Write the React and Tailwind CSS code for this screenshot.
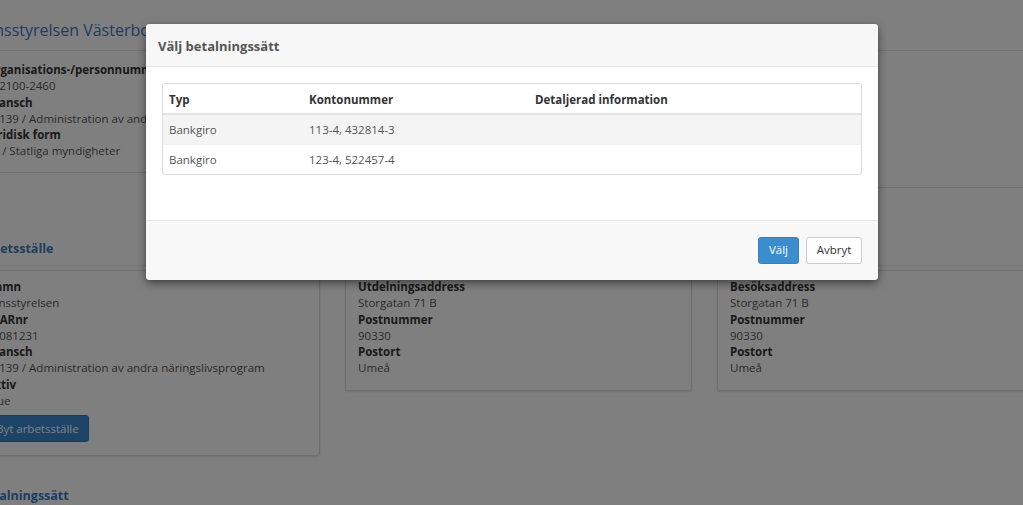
import React from "react";

function Field({ label, value }) {
  return (
    <>
      <div className="font-bold text-[#333]">{label}</div>
      <div className="text-[#555]">{value}</div>
    </>
  );
}

export default function App() {
  return (
    <div className="relative w-[1023px] h-[505px] overflow-hidden bg-white font-['Open_Sans',sans-serif] text-[11.5px] leading-[16.3px] text-[#555]">
      {/* underlying page */}
      <div className="-ml-[27px] w-[1120px] flex flex-col">
        <div className="pl-[4px] pt-[18px] pb-[8px] border-b border-[#e5e5e5] text-[16px] leading-[24px] text-[#3a7bbf]">
          Länsstyrelsen Västerbotten
        </div>
        <div className="flex gap-[20px] items-start">
          <div className="w-[520px] border-x border-b border-[#ddd] px-[12px] pt-[11px] pb-[12px]">
            <Field label="Organisations-/personnummer" value="202100-2460" />
            <Field label="Bransch" value="84139 / Administration av andra näringslivsprogram" />
            <Field label="Juridisk form" value="81 / Statliga myndigheter" />
          </div>
          <div className="flex-1 h-[137px] border-x border-b border-[#ddd]"></div>
        </div>

        <div className="mt-[51px] pl-[5px] pb-[6px] border-b border-[#e5e5e5] text-[12.5px] leading-[20px] font-bold text-[#3a7bbf]">
          Arbetsställe
        </div>
        <div className="mt-[4px] flex gap-[25px] items-start">
          <div className="w-[347px] border border-[#ddd] rounded-[3px] shadow-[0_1px_2px_rgba(0,0,0,0.12)] px-[12px] pt-[8px] pb-[13px]">
            <Field label="Namn" value="Länsstyrelsen" />
            <Field label="CFARnr" value="20081231" />
            <Field label="Bransch" value="84139 / Administration av andra näringslivsprogram" />
            <Field label="Aktiv" value="True" />
            <button className="mt-[6px] h-[27px] px-[9px] rounded-[3px] bg-[#3a89cf] border border-[#3079bd] text-white text-[11.5px]">
              Byt arbetsställe
            </button>
          </div>
          <div className="w-[347px] border border-[#ddd] rounded-[3px] shadow-[0_1px_2px_rgba(0,0,0,0.12)] px-[12px] pt-[8px] pb-[13px]">
            <Field label="Utdelningsaddress" value="Storgatan 71 B" />
            <Field label="Postnummer" value="90330" />
            <Field label="Postort" value="Umeå" />
          </div>
          <div className="w-[347px] border border-[#ddd] rounded-[3px] shadow-[0_1px_2px_rgba(0,0,0,0.12)] px-[12px] pt-[8px] pb-[13px]">
            <Field label="Besöksaddress" value="Storgatan 71 B" />
            <Field label="Postnummer" value="90330" />
            <Field label="Postort" value="Umeå" />
          </div>
        </div>

        <div className="mt-[30px] pl-[5px] text-[12.5px] leading-[20px] font-bold text-[#3a7bbf]">
          Betalningssätt
        </div>
      </div>

      {/* backdrop */}
      <div className="absolute inset-0 bg-black/50"></div>

      {/* modal */}
      <div className="absolute left-[146px] top-[24px] w-[732px] h-[256px] flex flex-col bg-white rounded-[4px] overflow-hidden shadow-[0_3px_9px_rgba(0,0,0,0.5)]">
        <div className="h-[43px] flex items-center pt-[2px] px-[12px] bg-[#f7f7f7] border-b border-[#e5e5e5] text-[13px] font-bold text-[#555]">
          Välj betalningssätt
        </div>
        <div className="h-[153px] px-[16px] pt-[16px]">
          <div className="border border-[#ddd] rounded-[3px] overflow-hidden">
            <div className="flex h-[31px] items-center pt-[3px] border-b-2 border-[#e3e3e3] font-bold text-[#333]">
              <div className="w-[139px] pl-[6px]">Typ</div>
              <div className="w-[226px] pl-[7px]">Kontonummer</div>
              <div className="flex-1 pl-[7px]">Detaljerad information</div>
            </div>
            <div className="flex h-[30px] items-center pt-[1px] bg-[#f4f4f4] text-[#555]">
              <div className="w-[139px] pl-[6px]">Bankgiro</div>
              <div className="w-[226px] pl-[7px]">113-4, 432814-3</div>
              <div className="flex-1 pl-[7px]"></div>
            </div>
            <div className="flex h-[29px] items-center pt-[1px] text-[#555]">
              <div className="w-[139px] pl-[6px]">Bankgiro</div>
              <div className="w-[226px] pl-[7px]">123-4, 522457-4</div>
              <div className="flex-1 pl-[7px]"></div>
            </div>
          </div>
        </div>
        <div className="flex-1 flex items-center justify-end gap-[7px] pr-[16px] bg-[#f8f8f8] border-t border-[#e5e5e5]">
          <button className="h-[27px] w-[41px] rounded-[3px] bg-[#3c8dcd] border border-[#3481c2] text-white text-[11.5px]">
            Välj
          </button>
          <button className="h-[27px] w-[56px] rounded-[3px] bg-white border border-[#ccc] text-[#333] text-[11.5px]">
            Avbryt
          </button>
        </div>
      </div>
    </div>
  );
}
